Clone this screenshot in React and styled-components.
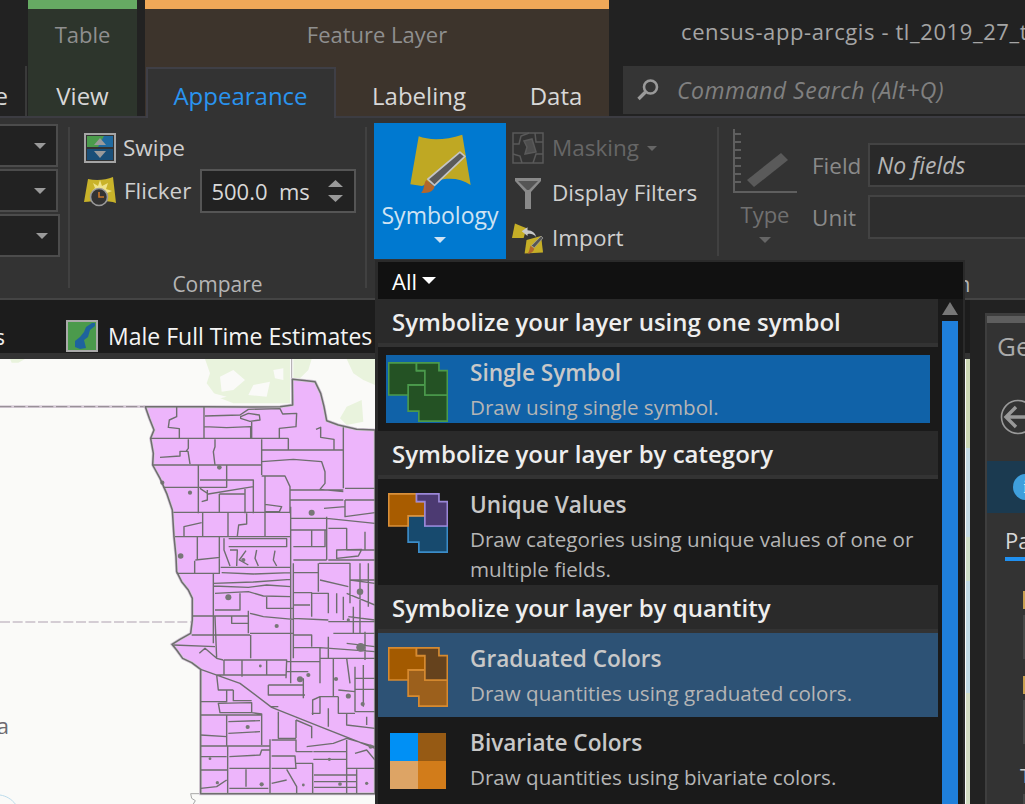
import React from 'react'
import styled, { createGlobalStyle } from 'styled-components'

const Global = createGlobalStyle`
	html, body { margin: 0; padding: 0; background: #222; }
	* { box-sizing: border-box; }
	body { font-family: "Open Sans", "Noto Sans", "Liberation Sans", sans-serif; }
`

// county boundaries, traced in a 1125 wide coordinate space
const STATE = 'M436 170L530 170 612 170 750 171 840 170 878 165 877 88 920 92 945 95 962 130 972 170 980 212 1015 225 1070 238 1125 240V1331H602V958L575 938 548 925 530 900 516 883 540 868 572 850 577 810 577 745 565 720 545 695 530 665 528 620 522 560 517 480 500 430 480 385 458 345 460 310 452 265 462 240 448 205Z'
const COUNTIES = [
	'M530 170V200L508 210 505 232 538 236V265', 'M612 170V265', 'M612 230L680 233 752 230V265', 'M615 198L720 195 745 178 840 176 848 192 890 190 888 230 838 235V265',
	'M722 200L745 190 778 195 780 210 750 214 722 205Z', 'M755 214V265', 'M865 265V300H1030V232', 'M948 238L962 232V262L1002 268V300', 'M1030 232V415',
	'M453 265H865', 'M458 345H785', 'M480 322L540 318V304H564L570 342', 'M565 268V295L558 304', 'M645 268V290L640 305 645 345', 'M785 268V375', 'M785 335L880 328 965 335 975 365V400L960 418 1030 425',
	'M785 300H865', 'M785 378H855L870 410V490', 'M595 345V490', 'M600 390H680V345', 'M600 412H680V390H760V410L625 432 600 415', 'M760 395V490', 'M490 412H600', 'M735 415V490',
	'M658 432H735', 'M622 420V450L605 455', 'M658 432V487', 'M795 463L845 470 838 485H795', 'M795 378V560', 'M520 487H870', 'M608 487V558', 'M684 487V558', 'M740 490V522L716 525 712 558',
	'M552 558V530L605 518', 'M525 560H870', 'M592 562V630', 'M658 562V668', 'M586 630L660 622', 'M584 632V668', 'M530 670H660', 'M686 566H860V590H686', 'M672 565V600L690 648', 'M690 600H712L710 648', 'M738 602L718 630 745 645',
	'M770 600L765 625 775 648', 'M825 602L820 630 830 648', 'M870 420H1030', 'M870 450H1030', 'M872 470V1000', 'M872 505H980L1125 520', 'M870 540H980', 'M1035 415H1125', 'M1035 450H1125', 'M1035 450V500L1125 488', 'M972 475L1035 470',
	'M980 500V630', 'M935 540V590H880', 'M975 540V590H935', 'M880 630H980', 'M985 535H1040V600H1100', 'M1010 600L1085 598 1075 618 1010 625Z', 'M1095 545V600H1125', 'M985 630H1125',
	'M640 672V880', 'M662 652H872', 'M665 668L760 672 872 668', 'M640 700L760 696 872 688', 'M640 708L745 712 800 705 872 710', 'M645 730L745 725 790 738 872 740', 'M645 780H720V730', 'M800 740V775H880', 'M745 782V850', 'M640 798H745',
	'M695 798V820H745', 'M750 790L790 800 880 808', 'M578 798H645', 'M575 855H750', 'M520 885L645 890', 'M645 800L650 925', 'M750 850H880', 'M752 855V925', 'M880 640V925', 'M880 668H955', 'M955 640V725', 'M880 728H935V800', 'M935 730H985V790', 'M880 765H930',
	'M880 805L985 810', 'M1010 730V790', 'M957 640H1050V690L1125 700', 'M960 690L1045 710', 'M1050 640V760', 'M985 815H1125', 'M880 855H935V890', 'M880 893H960L1125 905', 'M1040 730L1125 765', 'M1080 640V850', 'M1045 800L1125 810', 'M1105 640V770',
	'M1000 850H1125', 'M1095 845V930', 'M1040 880L1125 890', 'M985 860V925', 'M960 895V1000', 'M1000 925V1040', 'M1040 925L1050 1000', 'M1065 950V1085', 'M1090 945V1070', 'M1065 985H1125', 'M1065 1018H1125', 'M960 925H1125', 'M1030 740V810', 'M1050 690H1125', 'M1060 770V850',
	'M598 910L615 895 650 925 670 930', 'M672 930V975', 'M672 930H860L858 985', 'M726 930V980', 'M800 975V930', 'M650 975H860', 'M650 975L655 1020H700', 'M700 1020V1052H755', 'M805 1005V1035H915', 'M805 1005H910', 'M860 935H960', 'M860 965H925',
	'M910 985V1045', 'M602 1055H680V1020', 'M602 958L720 1000 815 1072 960 1130 1125 1195', 'M655 1060L755 1058V1088H660Z', 'M755 1088L785 1092V1185', 'M602 1095H680V1188', 'M680 1095H785', 'M685 1115L780 1112', 'M685 1150L780 1145', 'M602 1155L680 1160',
	'M835 1085V1165H888', 'M812 1070H835', 'M888 1110V1165', 'M888 1110L935 1130V1165', 'M938 1095V1050L960 1040H1015', 'M985 1075V1130', 'M1015 1040V1090H1065', 'M1040 1090V1125L1125 1135', 'M1015 1020L1065 1025', 'M960 1040V1090H935', 'M1065 1085H1125',
	'M602 1188H810', 'M602 1220H680', 'M683 1188V1330', 'M688 1220L780 1215 785 1200H810V1255', 'M810 1168V1330', 'M688 1255H810', 'M815 1170H888V1205', 'M815 1218H885L888 1255H815', 'M888 1205H938', 'M888 1240H938V1330', 'M920 1190L1000 1180 1040 1165 1125 1190',
	'M940 1205H1040', 'M940 1228H1040', 'M1040 1170V1330', 'M1040 1255H1125', 'M1065 1210L1100 1200 1125 1230', 'M602 1260H683', 'M602 1315L650 1310 680 1290', 'M688 1315H805', 'M738 1258V1310', 'M815 1300L860 1290', 'M860 1258L890 1310V1330', 'M942 1275H1070', 'M942 1295H1070',
	'M942 1312H1070', 'M1070 1258V1330', 'M1100 1100V1125',
]
const CITIES = [[487, 398, 9], [570, 428, 9], [658, 352, 10], [935, 488, 13], [542, 618, 12], [730, 630, 9], [685, 742, 13], [830, 828, 9], [1080, 725, 14], [1082, 892, 19], [1045, 1038, 11], [1088, 1062, 9], [900, 988, 13], [1008, 987, 9], [781, 948, 6], [743, 1131, 9], [1112, 1190, 9], [630, 1226, 6], [988, 1228, 7], [1100, 1300, 7], [1020, 1302, 8], [785, 1303, 9], [652, 1298, 7], [910, 1305, 6], [1045, 810, 7], [925, 975, 9]]

function MapDrawing(){
	return(
		<MapSvg viewBox="0 27 1125 1335">
			<MapPatches>
				<path fill="#e9f3dd" d="M615 27H870V160H700L650 140 620 100 630 70ZM880 27H935L925 60 900 85 880 85ZM1040 27H1125V105L1090 90 1060 70ZM1040 170L1085 150 1090 215 1040 225 1020 205Z" />
				<path fill="#fafaf8" d="M660 80L700 60 735 90 700 120 665 125ZM760 105L810 95 800 140 745 135ZM640 130L680 140 640 150ZM820 60L850 55 850 90 825 85Z" />
				<path fill="#e9f3dd" d="M30 27H75L55 38H35Z" />
			</MapPatches>
			<path stroke="#d7ccd8" strokeWidth="8" fill="none" d="M0 170H436" />
			<path stroke="#8c868c" strokeWidth="3" strokeDasharray="34 8" fill="none" d="M0 170H436" />
			<path stroke="#c7bec8" strokeWidth="4" strokeDasharray="30 8" fill="none" d="M0 816H575" />
			<path stroke="#aaa5aa" strokeWidth="3" fill="none" d="M875 27V165" />
			<path stroke="#bcdcec" strokeWidth="3" fill="none" d="M0 1335C20 1338 35 1348 46 1362" />
			<path stroke="#a8a8a8" strokeWidth="3" fill="none" d="M600 1331H572L575 1345 586 1352 580 1362" />
			<MapText x="-10" y="1152">a</MapText>
			<path d={STATE} fill="#edb5fb" stroke="#d3c8d6" strokeWidth="9" />
			<path d={COUNTIES.join(' ')} fill="none" stroke="#6e6e6e" strokeWidth="4.2" strokeLinejoin="round" />
			{CITIES.map(([x, y, r], i) => (
				<circle key={i} cx={x} cy={y} r={r * 0.7} fill="#777" />
			))}
			<path d={STATE} fill="none" stroke="#6e6e6e" strokeWidth="4.6" strokeLinejoin="round" />
		</MapSvg>
	)
}

const Triangle = ({w = 12, h = 6, color = '#9a9a9a', up}) => (
	<TriSvg width={w} height={h} viewBox="0 0 14 7" preserveAspectRatio="none">
		<path d={up ? 'M7 0L14 7H0Z' : 'M0 0H14L7 7Z'} fill={color} />
	</TriSvg>
)

const SymbologyIcon = () => (
	<svg width="67" height="62" viewBox="110 40 200 185">
		<path d="M145 50C175 62 225 62 275 45L300 195C260 168 210 172 155 198L120 193Z" fill="#bfa823" />
		<path d="M268 97L283 110 192 196 172 178Z" fill="#5a5a5a" stroke="#c4c4c4" strokeWidth="5" strokeLinejoin="round" />
		<path d="M168 180L192 200C190 214 172 222 152 218 164 208 158 190 168 180Z" fill="#b2672c" />
	</svg>
)

const SwipeIcon = () => (
	<svg width="32" height="30" viewBox="0 0 32 30">
		<rect x="1" y="1" width="30" height="28" fill="none" stroke="#a5a5a5" strokeWidth="2" />
		<rect x="3" y="3" width="26" height="11" fill="#1f6aa0" />
		<path d="M3 3H20L14 14H3Z" fill="#4b9b4c" />
		<rect x="3" y="16" width="26" height="11" fill="#1a4f78" />
		<path d="M16 5L22 12H10Z" fill="#9a9a9a" />
		<path d="M10 18H22L16 25Z" fill="#9a9a9a" />
	</svg>
)

const FlickerIcon = () => (
	<svg width="33" height="31" viewBox="0 0 33 31">
		<path d="M4 3C12 5 22 4 29 1L32 27C24 24 10 25 0 26Z" fill="#c9b32a" />
		<path d="M16 4L18 10 24 7 22 13 28 15 18 19 8 15 11 12 9 7 14 10Z" fill="#efe38a" />
		<circle cx="15" cy="21" r="8.5" fill="#333" stroke="#999" strokeWidth="1.6" />
		<path d="M15 16V21H20" fill="none" stroke="#c9762a" strokeWidth="1.6" />
	</svg>
)

const MaskingIcon = () => (
	<svg width="32" height="32" viewBox="0 0 32 32" fill="none" stroke="#5a5a5a" strokeWidth="1.5">
		<rect x="1" y="1" width="30" height="30" />
		<path d="M1 12H7L9 4 17 1M31 10L24 10 23 1M31 22H24L21 31M1 22L8 24 10 31" />
		<path d="M12 9L20 7 24 20 13 22 15 15Z" fill="#4e4e4e" />
	</svg>
)

const FilterIcon = () => (
	<svg width="32" height="32" viewBox="-2 0 32 32">
		<path d="M1 1H27V4L17 15V32H11V15L1 4Z" fill="#8a8a8a" />
		<path d="M4 4H24L15 13H13Z" fill="#555" />
	</svg>
)

const ImportIcon = () => (
	<svg width="32" height="33" viewBox="0 0 33 33">
		<path d="M3 1L15 6 12 16 0 16Z" fill="#c5ae27" />
		<path d="M15 18L30 14 32 31 13 32Z" fill="#c5ae27" />
		<path d="M10 9L16 5 16 8C21 8 24 11 25 15 22 12 19 11 16 12V14Z" fill="#c8c8c8" />
		<path d="M30 14L32 16 23 26 20 24Z" fill="#555" stroke="#aaa" strokeWidth=".7" />
		<path d="M19 24L23 27C22 31 18 32 16 32 18 30 18 27 19 24Z" fill="#b2672c" />
	</svg>
)

const TypeIcon = () => (
	<svg width="64" height="64" viewBox="0 0 64 64" fill="none">
		<path d="M1 0V63H64M1 5H8M1 13H8M1 21H8M1 29H8M1 37H8M1 45H8M1 53H8" stroke="#5f5f5f" strokeWidth="2" />
		<path d="M48 24L55 31 21 58 14 51Z" fill="#5a5a5a" />
	</svg>
)

const SearchIcon = () => (
	<svg width="24" height="24" viewBox="0 0 24 24" fill="none" stroke="#9a9a9a" strokeWidth="2.6">
		<circle cx="14.5" cy="9" r="6.5" />
		<path d="M9.5 14L2.5 21" strokeWidth="3.4" />
	</svg>
)

const LayerThumb = () => (
	<svg width="32" height="32" viewBox="0 0 32 32">
		<rect x="1" y="1" width="30" height="30" fill="#4b9a4c" stroke="#aaa" strokeWidth="2" />
		<path d="M26 3L29 3V6L24 10 22 17 18 20 20 28 14 29 9 27V21L14 17 18 12 20 7Z" fill="#1e639d" />
	</svg>
)

const SHAPE_A = 'M2 2H85V25H110V68H60V98H2Z'
const SHAPE_B = 'M85 2H152V25H177V98H110V25H85Z'
const SHAPE_C = 'M60 68H110V98H177V176H92V146H60Z'

const Shapes = ({a, b, c}) => (
	<RowSvg width="60" height="60" viewBox="0 0 179 178" strokeWidth="5">
		<path d={SHAPE_C} fill={c[0]} stroke={c[1]} />
		<path d={SHAPE_A} fill={a[0]} stroke={a[1]} />
		<path d={SHAPE_B} fill={b[0]} stroke={b[1]} />
	</RowSvg>
)

const Bivariate = () => (
	<BiGrid>
		<BiCell $c="#0090f5" />
		<BiCell $c="#965a14" />
		<BiCell $c="#dda465" />
		<BiCell $c="#d27c1a" />
	</BiGrid>
)

const GREEN = ['#245224', '#4b9a4c']
const MENU = [
	{head: 'Symbolize your layer using one symbol', rows: [
		{title: 'Single Symbol', desc: 'Draw using single symbol.', inset: true, bg: '#1062a8', icon: <Shapes a={GREEN} b={GREEN} c={GREEN} />},
	]},
	{head: 'Symbolize your layer by category', rows: [
		{title: 'Unique Values', desc: 'Draw categories using unique values of one or multiple fields.', icon: <Shapes a={['#a85c00', '#d9903a']} b={['#4c3a72', '#9b87d8']} c={['#174a6e', '#3b8cc8']} />},
	]},
	{head: 'Symbolize your layer by quantity', rows: [
		{title: 'Graduated Colors', desc: 'Draw quantities using graduated colors.', bg: '#2d5275', icon: <Shapes a={['#a35a00', '#d68a30']} b={['#65421d', '#d68a30']} c={['#9c601c', '#d68a30']} />},
		{title: 'Bivariate Colors', desc: 'Draw quantities using bivariate colors.', icon: <Bivariate />},
	]},
]

export default function App(){
	return(
		<Page>
			<Global />
			<TopBar>
				<StubColumn>
					<StubHead />
					<StubTab><TabLabel>Share</TabLabel></StubTab>
				</StubColumn>
				<ContextColumn $w={109} $bar="#66aa63" $bg="#2d352c">
					<ContextHead>Table</ContextHead>
					<TabRow><TabLabel>View</TabLabel></TabRow>
				</ContextColumn>
				<ContextGap />
				<ContextColumn $w={464} $bar="#f0a858" $bg="#3d342c">
					<ContextHead>Feature Layer</ContextHead>
					<TabRow>
						<ActiveTab>Appearance</ActiveTab>
						<TabSlot $w={167}><TabLabel>Labeling</TabLabel></TabSlot>
						<TabSlot $w={107}><TabLabel>Data</TabLabel></TabSlot>
					</TabRow>
				</ContextColumn>
				<TitleColumn>
					<WindowTitle>census-app-arcgis - tl_2019_27_tract</WindowTitle>
					<CommandSearch>
						<SearchIcon />
						<SearchHint>Command Search (Alt+Q)</SearchHint>
					</CommandSearch>
				</TitleColumn>
			</TopBar>

			<Ribbon>
				<ComboStack>
					<Combo $w={58}><Triangle /></Combo>
					<Combo $w={58}><Triangle /></Combo>
					<Combo $w={60}><Triangle /></Combo>
				</ComboStack>
				<RibbonSep />
				<CompareGroup>
					<CompareBody>
						<ToolRow>
							<SwipeIcon />
							<ToolText>Swipe</ToolText>
						</ToolRow>
						<ToolRow>
							<FlickerIcon />
							<ToolText>Flicker</ToolText>
							<Spinner>
								<SpinnerValue>500.0&nbsp;&nbsp;ms</SpinnerValue>
								<SpinnerArrows>
									<Triangle w={15} h={7} up />
									<Triangle w={15} h={7} />
								</SpinnerArrows>
							</Spinner>
						</ToolRow>
					</CompareBody>
					<GroupLabel>Compare</GroupLabel>
				</CompareGroup>
				<RibbonSep />
				<DrawingGroup>
					<SymbologyButton>
						<SymbologyIcon />
						<SymbologyText>Symbology</SymbologyText>
						<Triangle color="#cfe3f3" />
					</SymbologyButton>
					<ToolColumn>
						<SmallTool>
							<MaskingIcon />
							<ToolText $muted>Masking</ToolText>
							<Triangle w={10} h={5} color="#666" />
						</SmallTool>
						<SmallTool>
							<FilterIcon />
							<ToolText>Display Filters</ToolText>
						</SmallTool>
						<SmallTool>
							<ImportIcon />
							<ToolText>Import</ToolText>
						</SmallTool>
					</ToolColumn>
				</DrawingGroup>
				<RibbonSep $short />
				<ExtrusionGroup>
					<ExtrusionBody>
						<TypeButton>
							<TypeIcon />
							<TypeText>Type</TypeText>
							<Triangle color="#666" />
						</TypeButton>
						<FieldStack>
							<FieldRow>
								<FieldLabel>Field</FieldLabel>
								<FieldInput $bg="#292929"><FieldValue>No fields</FieldValue></FieldInput>
							</FieldRow>
							<FieldRow>
								<FieldLabel>Unit</FieldLabel>
								<FieldInput $bg="#2e2e2e" />
							</FieldRow>
						</FieldStack>
					</ExtrusionBody>
					<ExtrusionLabel>Extrusion</ExtrusionLabel>
				</ExtrusionGroup>
			</Ribbon>

			<Body>
				<MapColumn>
					<LayerBar>
						<LayerStub>Layers</LayerStub>
						<LayerThumb />
						<LayerName>Male Full Time Estimates</LayerName>
					</LayerBar>
					<MapStrip />
					<MapArea>
						<MapDrawing />
						<MapEdge />
					</MapArea>
				</MapColumn>
				<Dock>
					<Pane>
						<PaneGrip />
						<PaneTitle>Geoprocessing</PaneTitle>
						<BackCircle>
							<svg width="40" height="36" viewBox="0 0 40 36">
								<circle cx="18" cy="18" r="16.5" fill="none" stroke="#999" strokeWidth="1.6" />
								<path d="M16 8L6 18 16 28M7 18H34" fill="none" stroke="#999" strokeWidth="3.4" />
							</svg>
						</BackCircle>
						<InfoBar><InfoDot>i</InfoDot></InfoBar>
						<PaneTab>Parameters</PaneTab>
						<PaneFields>
							<ParamMark />
							<ParamBox />
							<ParamMark $top={17} />
							<ParamBox />
							<ParamCut>T</ParamCut>
							<ParamBox />
						</PaneFields>
					</Pane>
				</Dock>
			</Body>

			<Menu>
				<MenuFilter>
					<MenuFilterText>All</MenuFilterText>
					<Triangle w={14} h={7} color="#fff" />
				</MenuFilter>
				<MenuBody>
					<MenuList>
						{MENU.map(section => (
							<section key={section.head}>
								<SectionHead>{section.head}</SectionHead>
								{section.rows.map(row => (
									<MenuRow key={row.title} $bg={row.bg} $inset={row.inset}>
										{row.icon}
										<RowText>
											<RowTitle>{row.title}</RowTitle>
											<RowDesc>{row.desc}</RowDesc>
										</RowText>
									</MenuRow>
								))}
							</section>
						))}
					</MenuList>
					<ScrollGutter>
						<Triangle w={16} h={13} color="#777" up />
						<ScrollThumb />
					</ScrollGutter>
				</MenuBody>
			</Menu>
		</Page>
	)
}

const Page = styled.div`
	position: relative;
	width: 1025px;
	height: 804px;
	overflow: hidden;
	background: #222;
	display: flex;
	flex-direction: column;
`
const TriSvg = styled.svg`
	display: block;
	flex: none;
`
const TopBar = styled.div`
	height: 118px;
	display: flex;
	flex: none;
	background: #222;
	border-bottom: 2px solid #3c3c42;
`
const StubColumn = styled.div`
	width: 28px;
	flex: none;
	display: flex;
	flex-direction: column;
`
const StubHead = styled.div`
	height: 66px;
`
const StubTab = styled.div`
	height: 50px;
	width: 27px;
	border-right: 2px solid #3a3a3a;
	display: flex;
	justify-content: flex-end;
	overflow: hidden;
	padding: 8px 17px 0 0;
	align-items: center;
`
const ContextColumn = styled.div`
	width: ${p => p.$w}px;
	flex: none;
	display: flex;
	flex-direction: column;
	background: ${p => p.$bg};
	border-top: 9px solid ${p => p.$bar};
`
const ContextGap = styled.div`
	width: 8px;
	flex: none;
`
const ContextHead = styled.div`
	height: 57px;
	flex: none;
	display: flex;
	align-items: center;
	justify-content: center;
	font-size: 22px;
	color: #8f8f8f;
	padding-bottom: 7px;
`
const TabRow = styled.div`
	height: 50px;
	display: flex;
	justify-content: center;
	align-items: center;
	padding-top: 8px;
`
const TabLabel = styled.span`
	font-size: 24px;
	color: #d8d8d8;
	white-space: nowrap;
	flex: none;
`
const ActiveTab = styled.div`
	width: 190px;
	flex: none;
	align-self: flex-start;
	margin: -7px 0 0 1px;
	height: 51px;
	background: #333;
	border: 2px solid #3f3f46;
	border-bottom: none;
	padding-top: 3px;
	color: #2a94ef;
	font-size: 24px;
	display: flex;
	align-items: center;
	justify-content: center;
	position: relative;
	z-index: 1;
`
const TabSlot = styled.div`
	width: ${p => p.$w}px;
	flex: none;
	text-align: center;
`
const TitleColumn = styled.div`
	flex: 1;
	min-width: 0;
	padding-left: 14px;
	overflow: hidden;
	display: flex;
	flex-direction: column;
`
const WindowTitle = styled.div`
	height: 66px;
	flex: none;
	padding: 15px 0 0 58px;
	font-size: 22px;
	letter-spacing: .6px;
	line-height: 32px;
	color: #a5a5a5;
	white-space: nowrap;
`
const CommandSearch = styled.div`
	height: 48px;
	background: #353535;
	display: flex;
	align-items: center;
	gap: 17px;
	padding-left: 13px;
`
const SearchHint = styled.span`
	font-size: 23px;
	letter-spacing: .5px;
	font-style: italic;
	color: #808080;
	white-space: nowrap;
`
const Ribbon = styled.div`
	height: 182px;
	flex: none;
	display: flex;
	background: #333;
	border-bottom: 2px solid #444;
`
const RibbonSep = styled.div`
	width: 2px;
	flex: none;
	background: #414141;
	margin: 9px 0 ${p => (p.$short ? '42px' : '10px')};
`
const ComboStack = styled.div`
	width: 68px;
	flex: none;
	display: flex;
	flex-direction: column;
	gap: 2px;
	padding-top: 6px;
`
const Combo = styled.div`
	width: ${p => p.$w}px;
	height: 43px;
	background: #222;
	border: 2px solid #4c4c4c;
	border-left: none;
	display: flex;
	align-items: center;
	justify-content: flex-end;
	padding-right: 10px;
`
const CompareGroup = styled.div`
	width: 295px;
	flex: none;
	display: flex;
	flex-direction: column;
	justify-content: space-between;
	padding: 15px 0 1px 14px;
`
const CompareBody = styled.div`
	display: flex;
	flex-direction: column;
	gap: 6px;
`
const ToolRow = styled.div`
	display: flex;
	align-items: center;
	gap: 7px;
	min-height: 30px;
`
const ToolText = styled.span`
	font-size: 22.5px;
	line-height: 30px;
	white-space: nowrap;
	color: ${p => (p.$muted ? '#666' : '#cfcfcf')};
`
const Spinner = styled.div`
	width: 156px;
	height: 44px;
	margin-left: 2px;
	background: #222;
	border: 2px solid #555;
	display: flex;
	align-items: center;
	justify-content: space-between;
	padding: 0 11px 0 9px;
`
const SpinnerValue = styled.span`
	font-size: 22px;
	color: #d8d8d8;
`
const SpinnerArrows = styled.div`
	display: flex;
	flex-direction: column;
	gap: 8px;
`
const GroupLabel = styled.div`
	font-size: 21px;
	line-height: 26px;
	color: #b5b5b5;
	text-align: center;
	padding-right: 14px;
`
const DrawingGroup = styled.div`
	width: 350px;
	flex: none;
	display: flex;
	align-items: flex-start;
	padding: 5px 0 0 7px;
`
const SymbologyButton = styled.div`
	width: 132px;
	height: 136px;
	flex: none;
	background: #0079d0;
	display: flex;
	flex-direction: column;
	align-items: center;
	padding-top: 10px;
`
const SymbologyText = styled.div`
	font-size: 23px;
	line-height: 30px;
	margin: 5px 0 7px;
	color: #cfe3f3;
`
const ToolColumn = styled.div`
	display: flex;
	flex-direction: column;
	padding: 9px 0 0 6px;
	gap: 13px;
`
const SmallTool = styled.div`
	display: flex;
	align-items: center;
	gap: 8px;
	height: 32px;
`
const ExtrusionGroup = styled.div`
	flex: 1;
	min-width: 0;
	display: flex;
	flex-direction: column;
	justify-content: space-between;
	padding: 11px 0 1px 14px;
	overflow: hidden;
`
const ExtrusionBody = styled.div`
	display: flex;
`
const ExtrusionLabel = styled(GroupLabel)`
	text-align: left;
	padding: 0 0 0 145px;
	white-space: nowrap;
`
const TypeButton = styled.div`
	width: 64px;
	flex: none;
	display: flex;
	flex-direction: column;
	align-items: center;
`
const TypeText = styled.div`
	font-size: 22px;
	line-height: 30px;
	margin: 6px 0 8px;
	color: #707070;
`
const FieldStack = styled.div`
	flex: 1;
	min-width: 0;
	display: flex;
	flex-direction: column;
	gap: 8px;
	padding: 14px 0 0 15px;
`
const FieldRow = styled.div`
	display: flex;
	align-items: center;
`
const FieldLabel = styled.div`
	width: 56px;
	flex: none;
	font-size: 22.5px;
	color: #8a8a8a;
`
const FieldInput = styled.div`
	flex: 1;
	height: 44px;
	background: ${p => p.$bg};
	border: 2px solid #434343;
	border-right: none;
	display: flex;
	align-items: center;
	padding-left: 7px;
`
const FieldValue = styled.span`
	font-size: 23px;
	font-style: italic;
	color: #b5b5b5;
`
const Body = styled.div`
	flex: 1;
	min-height: 0;
	display: flex;
`
const MapColumn = styled.div`
	width: 970px;
	flex: none;
	display: flex;
	flex-direction: column;
`
const LayerBar = styled.div`
	height: 53px;
	flex: none;
	background: #1c1c1c;
	display: flex;
	align-items: flex-end;
	position: relative;
	padding: 0 0 1px 66px;
	gap: 10px;
`
const LayerStub = styled.span`
	position: absolute;
	right: 100%;
	bottom: 2px;
	margin-right: -5px;
	font-size: 22px;
	color: #eee;
`
const LayerName = styled.span`
	font-size: 23px;
	line-height: 32px;
	color: #f4f4f4;
	white-space: nowrap;
`
const MapStrip = styled.div`
	height: 6px;
	flex: none;
	background: #333;
`
const MapArea = styled.div`
	flex: 1;
	min-height: 0;
	background: #fafaf8;
	display: flex;
	justify-content: space-between;
`
const MapSvg = styled.svg`
	width: 375px;
	height: 445px;
	display: block;
	flex: none;
`
const MapPatches = styled.g`
	filter: blur(2px);
`
const MapText = styled.text`
	font-size: 66px;
	fill: #6d6a70;
`
const MapEdge = styled.div`
	width: 4px;
	background: linear-gradient(#cbd6b4 0 20%, #c3d9e3 20% 40%, #cdddc6 40% 50%, #c0d8e2 50% 75%, #d2dbc2 75%);
`
const Dock = styled.div`
	flex: 1;
	min-width: 0;
	background: #222;
	padding: 13px 0 0 15px;
`
const Pane = styled.div`
	height: 100%;
	background: #333;
	border-left: 2px solid #3e3e3e;
	border-top: 3px solid #3e3e3e;
	overflow: hidden;
	display: flex;
	flex-direction: column;
`
const PaneGrip = styled.div`
	height: 7px;
	flex: none;
	background: #5e5e5e;
`
const PaneTitle = styled.div`
	font-size: 26px;
	line-height: 36px;
	margin-top: 5px;
	padding-left: 10px;
	color: #aaa;
	white-space: nowrap;
`
const BackCircle = styled.div`
	height: 36px;
	margin-top: 35px;
	padding-left: 13px;
	flex: none;
`
const InfoBar = styled.div`
	height: 52px;
	margin-top: 26px;
	flex: none;
	background: #1b3a50;
	display: flex;
	align-items: center;
	padding-left: 26px;
`
const InfoDot = styled.div`
	width: 26px;
	height: 26px;
	flex: none;
	border-radius: 50%;
	background: #3f9fdc;
	color: #fff;
	font: bold 18px/26px "Liberation Serif", serif;
	text-align: center;
`
const PaneTab = styled.div`
	font-size: 22px;
	line-height: 30px;
	margin: 12px 0 0 18px;
	padding-bottom: 2px;
	border-bottom: 4px solid #2090f0;
	color: #d8d8d8;
	white-space: nowrap;
`
const PaneFields = styled.div`
	padding: 30px 0 0 36px;
`
const ParamMark = styled.div`
	width: 2px;
	height: 18px;
	margin-top: ${p => p.$top || 0}px;
	background: #c8a050;
`
const ParamBox = styled.div`
	height: 44px;
	margin-top: 6px;
	background: #2a2a2a;
	border: 2px solid #484848;
	border-right: none;
`
const ParamCut = styled.div`
	font-size: 20px;
	line-height: 24px;
	margin: 20px 0 0 -3px;
	color: #ccc;
`
const Menu = styled.div`
	position: absolute;
	left: 375px;
	top: 260px;
	width: 590px;
	height: 544px;
	background: #1a1a1a;
	border: solid #2a2a2a;
	border-width: 2px 2px 0 3px;
	display: flex;
	flex-direction: column;
`
const MenuFilter = styled.div`
	height: 37px;
	flex: none;
	background: #111;
	display: flex;
	align-items: center;
	gap: 5px;
	padding-left: 14px;
`
const MenuFilterText = styled.span`
	font-size: 22px;
	color: #fff;
`
const MenuBody = styled.div`
	flex: 1;
	min-height: 0;
	display: flex;
	overflow: hidden;
`
const MenuList = styled.div`
	width: 560px;
	flex: none;
`
const SectionHead = styled.div`
	height: 48px;
	background: #2a2a2a;
	border-bottom: 4px solid #333;
	padding-left: 14px;
	font-size: 24px;
	font-weight: 600;
	line-height: 46px;
	color: #eee;
	white-space: nowrap;
`
const MenuRow = styled.div`
	display: flex;
	align-items: flex-start;
	gap: 22px;
	background: ${p => p.$bg || 'transparent'};
	margin: ${p => (p.$inset ? '8px' : '0')};
	padding: ${p => (p.$inset ? '0 0 0 2px' : '0 0 0 10px')};
	--icon-top: ${p => (p.$inset ? '7px' : '14px')};
	--text-top: ${p => (p.$inset ? '3px' : '11px')};
	min-height: ${p => (p.$inset ? '68px' : '84px')};
`
const RowSvg = styled.svg`
	flex: none;
	margin-top: var(--icon-top);
`
const BiGrid = styled.div`
	width: 56px;
	height: 56px;
	margin: 16px 2px 0;
	flex: none;
	display: grid;
	grid-template-columns: 1fr 1fr;
`
const BiCell = styled.div`
	background: ${p => p.$c};
`
const RowText = styled.div`
	padding: var(--text-top) 10px 1px 0;
	display: flex;
	flex-direction: column;
	gap: 4px;
`
const RowTitle = styled.div`
	font-size: 22.6px;
	font-weight: 600;
	line-height: 30px;
	color: #c8c8c8;
`
const RowDesc = styled.div`
	font-size: 20.6px;
	line-height: 30px;
	color: #b5b5b5;
`
const ScrollGutter = styled.div`
	flex: 1;
	padding: 3px 0 0 4px;
	display: flex;
	flex-direction: column;
	gap: 6px;
`
const ScrollThumb = styled.div`
	width: 16px;
	flex: 1;
	background: #1f7fdb;
`
